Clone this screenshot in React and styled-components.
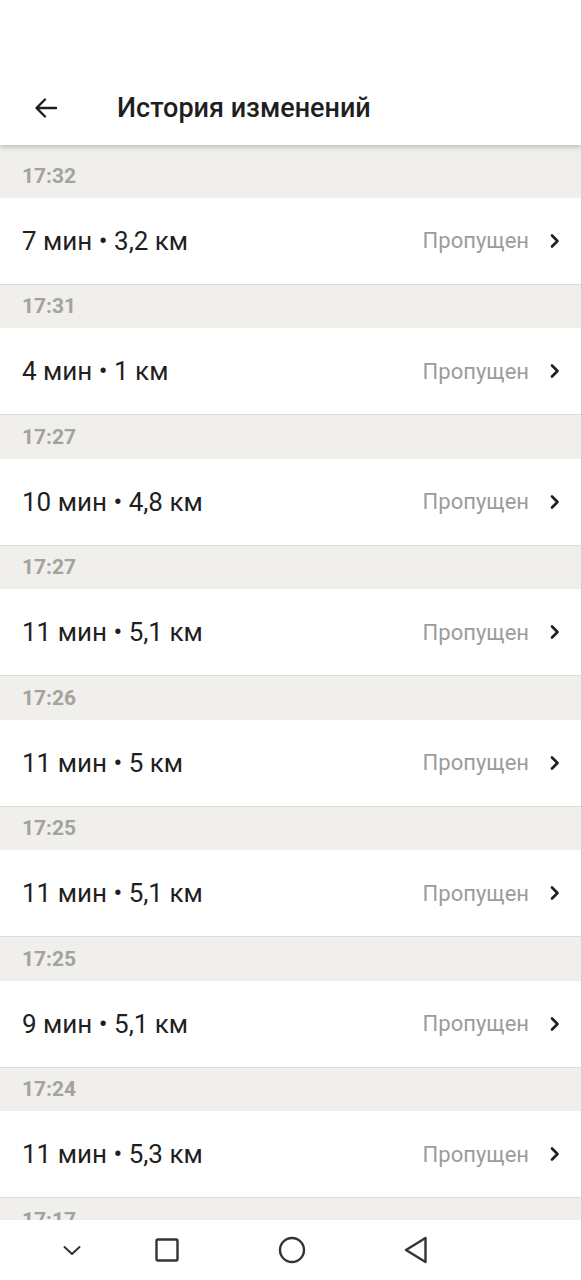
import React from "react";
import styled, { createGlobalStyle } from "styled-components";

const Global = createGlobalStyle`
  html, body { margin: 0; padding: 0; background: #fff; }
  body { font-family: Roboto, "Noto Sans", "Liberation Sans", sans-serif; -webkit-font-smoothing: antialiased; }
  * { box-sizing: border-box; }
`;

const Page = styled.div`
  width: 582px;
  height: 1280px;
  display: flex;
  flex-direction: column;
  overflow: hidden;
  background: #fff;
  border-right: 1px solid #cfcfcf;
`;

const Header = styled.header`
  position: relative;
  z-index: 2;
  height: 145px;
  flex: none;
  padding-top: 70px;
  background: #fff;
  box-shadow: 0 2px 5px rgba(0, 0, 0, 0.22);
`;

const TitleRow = styled.div`
  height: 75px;
  display: flex;
  align-items: center;
  padding-left: 33px;
`;

const BackButton = styled.button`
  width: 26px;
  height: 26px;
  padding: 0;
  border: 0;
  background: none;
  display: flex;
  align-items: center;
  justify-content: center;
  margin-right: 58px;
  color: #1f1f1f;
`;

const Title = styled.h1`
  margin: 0;
  font-size: 27px;
  font-weight: 500;
  color: #1f1f1f;
  letter-spacing: 0;
`;

const List = styled.main`
  flex: 1;
  min-height: 0;
  overflow: hidden;
  background: #f0efec;
  padding-top: 9px;
`;

const SectionHeader = styled.div`
  height: 43.5px;
  display: flex;
  align-items: center;
  padding-left: 22px;
  background: #f0efec;
  color: #a3a29e;
  font-size: 21px;
  font-weight: 700;
`;

const Row = styled.div`
  height: 87px;
  display: flex;
  align-items: center;
  padding: 0 20px 0 22px;
  background: #fff;
  border-bottom: 1px solid #dcdcda;
`;

const Summary = styled.span`
  flex: 1;
  font-size: 26px;
  color: #1f1f1f;
`;

const Status = styled.span`
  font-size: 22px;
  color: #9c9c9c;
  margin-right: 20px;
`;

const NavBar = styled.nav`
  height: 60px;
  flex: none;
  background: #fff;
  display: grid;
  grid-template-columns: 143px 48px 201px 48px;
  justify-items: center;
  align-items: center;
  color: #333;
`;

const NavSlot = styled.div`
  display: flex;
  align-items: center;
  justify-content: center;
`;

const items = [
  ["17:32", "7 мин • 3,2 км"],
  ["17:31", "4 мин • 1 км"],
  ["17:27", "10 мин • 4,8 км"],
  ["17:27", "11 мин • 5,1 км"],
  ["17:26", "11 мин • 5 км"],
  ["17:25", "11 мин • 5,1 км"],
  ["17:25", "9 мин • 5,1 км"],
  ["17:24", "11 мин • 5,3 км"],
];

const Chevron = () => (
  <svg width="12" height="16" viewBox="0 0 12 16">
    <path d="M3 2.5 L8.5 8 L3 13.5" fill="none" stroke="#1f1f1f" strokeWidth="2.6" strokeLinecap="round" strokeLinejoin="round" />
  </svg>
);

export default function App() {
  return (
    <>
      <Global />
      <Page>
        <Header>
          <TitleRow>
            <BackButton aria-label="Назад">
              <svg width="24" height="24" viewBox="0 0 24 24">
                <path d="M22 12 H3 M11 3.5 L2.5 12 L11 20.5" fill="none" stroke="#1f1f1f" strokeWidth="2.4" strokeLinecap="round" strokeLinejoin="round" />
              </svg>
            </BackButton>
            <Title>История изменений</Title>
          </TitleRow>
        </Header>
        <List>
          {items.map(([time, text], i) => (
            <React.Fragment key={i}>
              <SectionHeader>{time}</SectionHeader>
              <Row>
                <Summary>{text}</Summary>
                <Status>Пропущен</Status>
                <Chevron />
              </Row>
            </React.Fragment>
          ))}
          <SectionHeader>17:17</SectionHeader>
        </List>
        <NavBar>
          <NavSlot>
            <svg width="20" height="12" viewBox="0 0 20 12">
              <path d="M2.5 3 L10 10 L17.5 3" fill="none" stroke="#333" strokeWidth="2" strokeLinecap="round" strokeLinejoin="round" />
            </svg>
          </NavSlot>
          <NavSlot>
            <svg width="24" height="24" viewBox="0 0 24 24">
              <rect x="1.5" y="1.5" width="21" height="21" rx="1.5" fill="none" stroke="#333" strokeWidth="2.4" />
            </svg>
          </NavSlot>
          <NavSlot>
            <svg width="28" height="28" viewBox="0 0 28 28">
              <circle cx="14" cy="14" r="12" fill="none" stroke="#333" strokeWidth="2.4" />
            </svg>
          </NavSlot>
          <NavSlot>
            <svg width="26" height="28" viewBox="0 0 26 28">
              <path d="M22.5 2 L22.5 26 L3 14 Z" fill="none" stroke="#333" strokeWidth="2.4" strokeLinejoin="round" />
            </svg>
          </NavSlot>
        </NavBar>
      </Page>
    </>
  );
}
